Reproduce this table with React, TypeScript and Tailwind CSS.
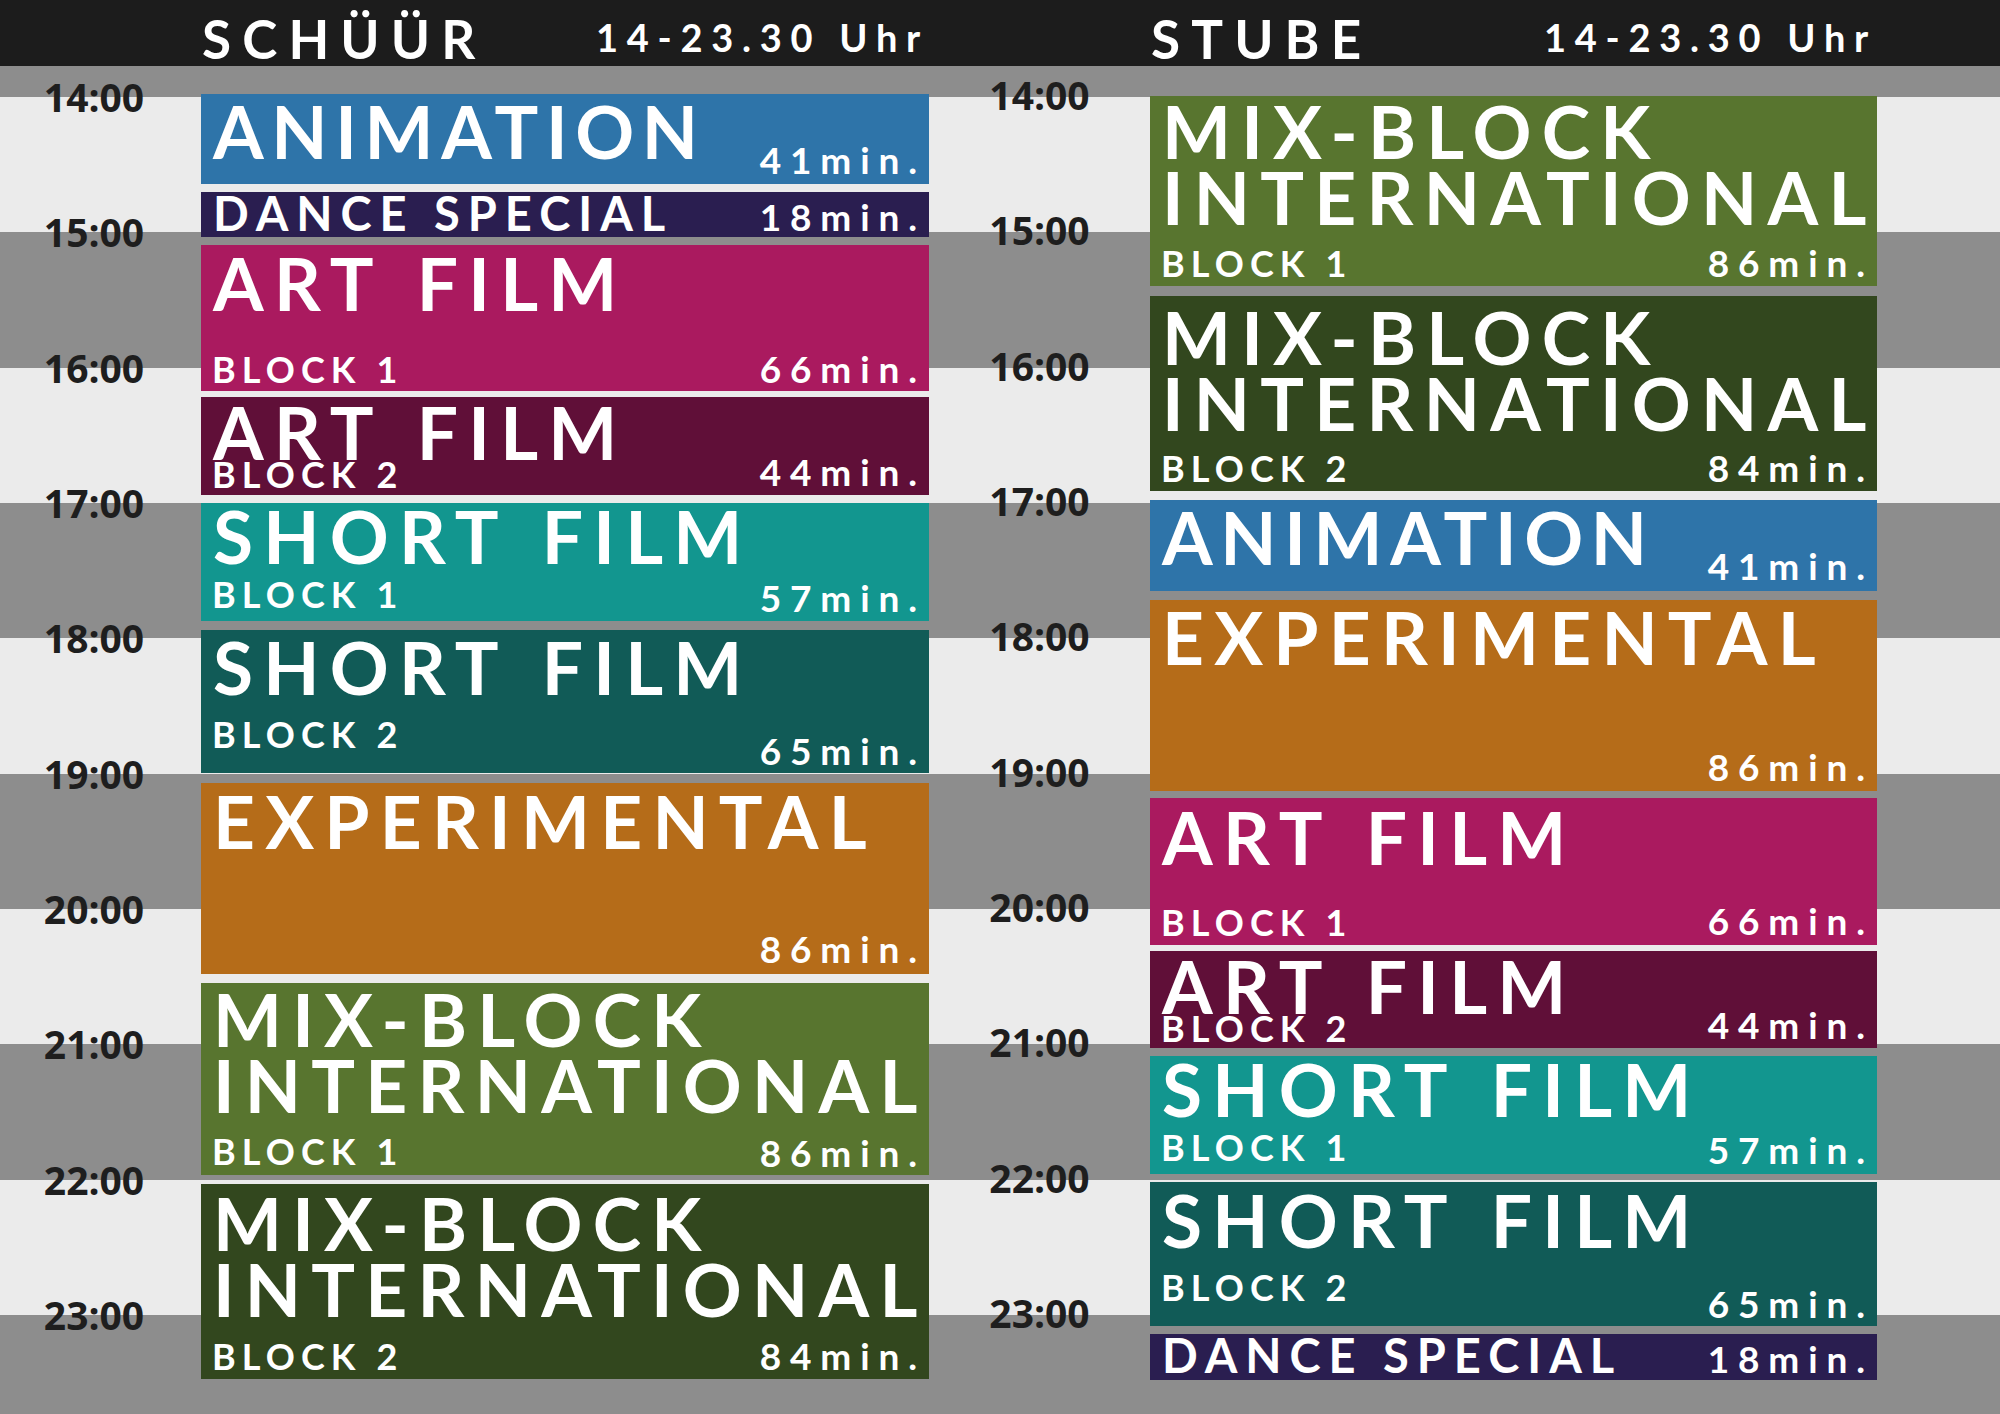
type Slot = {
  title: string[];
  sub?: string;
  min: string;
  box: string;
  pt?: string;
  subMb?: string;
  minMb: string;
  titleMb?: string;
  tt?: string;
  dance?: boolean;
};

const schuur: Slot[] = [
  { title: ["ANIMATION"], tt: "tracking-[0.105em]", min: "41min.", box: "mt-[28px] h-[90px] bg-[#2e74a9]", pt: "pt-[4px]", minMb: "mb-[6px]" },
  { dance: true, title: ["DANCE SPECIAL"], min: "18min.", box: "mt-[8px] h-[45px] bg-[#2a1e50]", titleMb: "mb-[0px]", minMb: "mb-[2px]" },
  { title: ["ART FILM"], sub: "BLOCK 1", min: "66min.", box: "mt-[8px] h-[146px] bg-[#aa1a5f]", pt: "pt-[5px]", subMb: "mb-[4px]", minMb: "mb-[4px]" },
  { title: ["ART FILM"], sub: "BLOCK 2", min: "44min.", box: "mt-[6px] h-[98px] bg-[#600f38]", pt: "pt-[2px]", subMb: "mb-[3px]", minMb: "mb-[5px]" },
  { title: ["SHORT FILM"], sub: "BLOCK 1", min: "57min.", box: "mt-[8px] h-[118px] bg-[#12968f]", pt: "pt-[0px]", subMb: "mb-[9px]", minMb: "mb-[5px]" },
  { title: ["SHORT FILM"], sub: "BLOCK 2", min: "65min.", box: "mt-[9px] h-[143px] bg-[#115b57]", pt: "pt-[4px]", subMb: "mb-[21px]", minMb: "mb-[4px]" },
  { title: ["EXPERIMENTAL"], min: "86min.", box: "mt-[10px] h-[191px] bg-[#b56c19]", pt: "pt-[5px]", minMb: "mb-[7px]" },
  { title: ["MIX-BLOCK", "INTERNATIONAL"], sub: "BLOCK 1", min: "86min.", box: "mt-[9px] h-[192px] bg-[#58752f]", pt: "pt-[3px]", subMb: "mb-[6px]", minMb: "mb-[4px]" },
  { title: ["MIX-BLOCK", "INTERNATIONAL"], sub: "BLOCK 2", min: "84min.", box: "mt-[9px] h-[195px] bg-[#32471e]", pt: "pt-[6px]", subMb: "mb-[5px]", minMb: "mb-[5px]" },
];

const stube: Slot[] = [
  { title: ["MIX-BLOCK", "INTERNATIONAL"], sub: "BLOCK 1", min: "86min.", box: "mt-[30px] h-[190px] bg-[#58752f]", pt: "pt-[2px]", subMb: "mb-[5px]", minMb: "mb-[5px]" },
  { title: ["MIX-BLOCK", "INTERNATIONAL"], sub: "BLOCK 2", min: "84min.", box: "mt-[10px] h-[195px] bg-[#32471e]", pt: "pt-[8px]", subMb: "mb-[5px]", minMb: "mb-[5px]" },
  { title: ["ANIMATION"], tt: "tracking-[0.105em]", min: "41min.", box: "mt-[9px] h-[91px] bg-[#2e74a9]", pt: "pt-[4px]", minMb: "mb-[7px]" },
  { title: ["EXPERIMENTAL"], min: "86min.", box: "mt-[9px] h-[191px] bg-[#b56c19]", pt: "pt-[4px]", minMb: "mb-[6px]" },
  { title: ["ART FILM"], sub: "BLOCK 1", min: "66min.", box: "mt-[7px] h-[147px] bg-[#aa1a5f]", pt: "pt-[6px]", subMb: "mb-[5px]", minMb: "mb-[6px]" },
  { title: ["ART FILM"], sub: "BLOCK 2", min: "44min.", box: "mt-[6px] h-[97px] bg-[#600f38]", pt: "pt-[2px]", subMb: "mb-[2px]", minMb: "mb-[5px]" },
  { title: ["SHORT FILM"], sub: "BLOCK 1", min: "57min.", box: "mt-[8px] h-[118px] bg-[#12968f]", pt: "pt-[0px]", subMb: "mb-[9px]", minMb: "mb-[6px]" },
  { title: ["SHORT FILM"], sub: "BLOCK 2", min: "65min.", box: "mt-[8px] h-[144px] bg-[#115b57]", pt: "pt-[5px]", subMb: "mb-[21px]", minMb: "mb-[4px]" },
  { dance: true, title: ["DANCE SPECIAL"], min: "18min.", box: "mt-[8px] h-[46px] bg-[#2a1e50]", titleMb: "mb-[1px]", minMb: "mb-[3px]" },
];

const hours = ["14:00", "15:00", "16:00", "17:00", "18:00", "19:00", "20:00", "21:00", "22:00", "23:00"];

const Min = ({ text, mb }: { text: string; mb: string }) => (
  <span className={`text-[37px] leading-none tracking-[0.24em] -mr-[0.24em] whitespace-nowrap ${mb}`}>{text}</span>
);

const Block = ({ s }: { s: Slot }) => {
  if (s.dance) {
    return (
      <div className={`flex items-end justify-between pl-[12px] pr-[12px] ${s.box}`}>
        <span className={`text-[47px] leading-none tracking-[0.17em] whitespace-nowrap ${s.titleMb}`}>{s.title[0]}</span>
        <Min text={s.min} mb={s.minMb} />
      </div>
    );
  }
  return (
    <div className={`grid grid-cols-1 pl-[8px] pr-[12px] ${s.box}`}>
      {/* TITLE */}
      <div className={`col-start-1 row-start-1 self-start pl-[4px] ${s.pt}`}>
        {s.title.map((t) => (
          <div
            key={t}
            className={`text-[73px] leading-[66px] [word-spacing:0.1em] whitespace-nowrap ${s.tt ?? "tracking-[0.14em]"}`}
          >
            {t}
          </div>
        ))}
      </div>
      {/* BLOCK + DURATION */}
      <div className="col-start-1 row-start-1 self-end flex items-end justify-between">
        {s.sub ? (
          <span className={`ml-[3px] text-[36px] leading-none tracking-[0.17em] whitespace-nowrap ${s.subMb}`}>{s.sub}</span>
        ) : (
          <span />
        )}
        <Min text={s.min} mb={s.minMb} />
      </div>
    </div>
  );
};

const Hours = ({ className }: { className: string }) => (
  <div className={`flex flex-col font-['Open_Sans',sans-serif] font-bold text-[39px] leading-none text-[#1e1e1e] ${className}`}>
    {hours.map((h) => (
      <div key={h} className="h-[135.33px] text-center">{h}</div>
    ))}
  </div>
);

export default function App() {
  return (
    <div className="w-[2000px] h-[1414px] overflow-hidden bg-[#8d8d8d] font-['Lato',sans-serif] font-bold text-white">
      {/* HEADER */}
      <div className="h-[66px] bg-[#1c1c1c] flex">
        <div className="w-[201px]" />
        <div className="w-[728px] flex">
          <span className="w-[399px] pt-[12px] pl-[1px] text-[53px] leading-none tracking-[0.21em]">SCHÜÜR</span>
          <span className="pt-[18px] text-[38px] leading-none tracking-[0.23em] whitespace-nowrap">14-23.30 Uhr</span>
        </div>
        <div className="w-[221px]" />
        <div className="w-[727px] flex">
          <span className="w-[402px] pt-[12px] pl-[1px] text-[53px] leading-none tracking-[0.21em]">STUBE</span>
          <span className="pt-[18px] text-[38px] leading-none tracking-[0.23em] whitespace-nowrap">14-23.30 Uhr</span>
        </div>
      </div>

      {/* TIMETABLE */}
      <div className="grid h-[1348px]">
        {/* STRIPES */}
        <div className="col-start-1 row-start-1 flex flex-col">
          <div className="h-[31px] bg-[#8d8d8d]" />
          <div className="h-[135.33px] bg-[#ebebeb]" />
          <div className="h-[135.33px] bg-[#8d8d8d]" />
          <div className="h-[135.33px] bg-[#ebebeb]" />
          <div className="h-[135.33px] bg-[#8d8d8d]" />
          <div className="h-[135.33px] bg-[#ebebeb]" />
          <div className="h-[135.33px] bg-[#8d8d8d]" />
          <div className="h-[135.33px] bg-[#ebebeb]" />
          <div className="h-[135.33px] bg-[#8d8d8d]" />
          <div className="h-[135.33px] bg-[#ebebeb]" />
          <div className="flex-1 bg-[#8d8d8d]" />
        </div>

        {/* COLUMNS */}
        <div className="col-start-1 row-start-1 flex items-start">
          <div className="w-[201px]">
            <Hours className="w-[188px] pt-[11px]" />
          </div>
          <div className="w-[728px] flex flex-col">
            {schuur.map((s, i) => (
              <Block key={i} s={s} />
            ))}
          </div>
          <Hours className="w-[221px] pt-[9px]" />
          <div className="w-[727px] flex flex-col">
            {stube.map((s, i) => (
              <Block key={i} s={s} />
            ))}
          </div>
        </div>
      </div>
    </div>
  );
}
